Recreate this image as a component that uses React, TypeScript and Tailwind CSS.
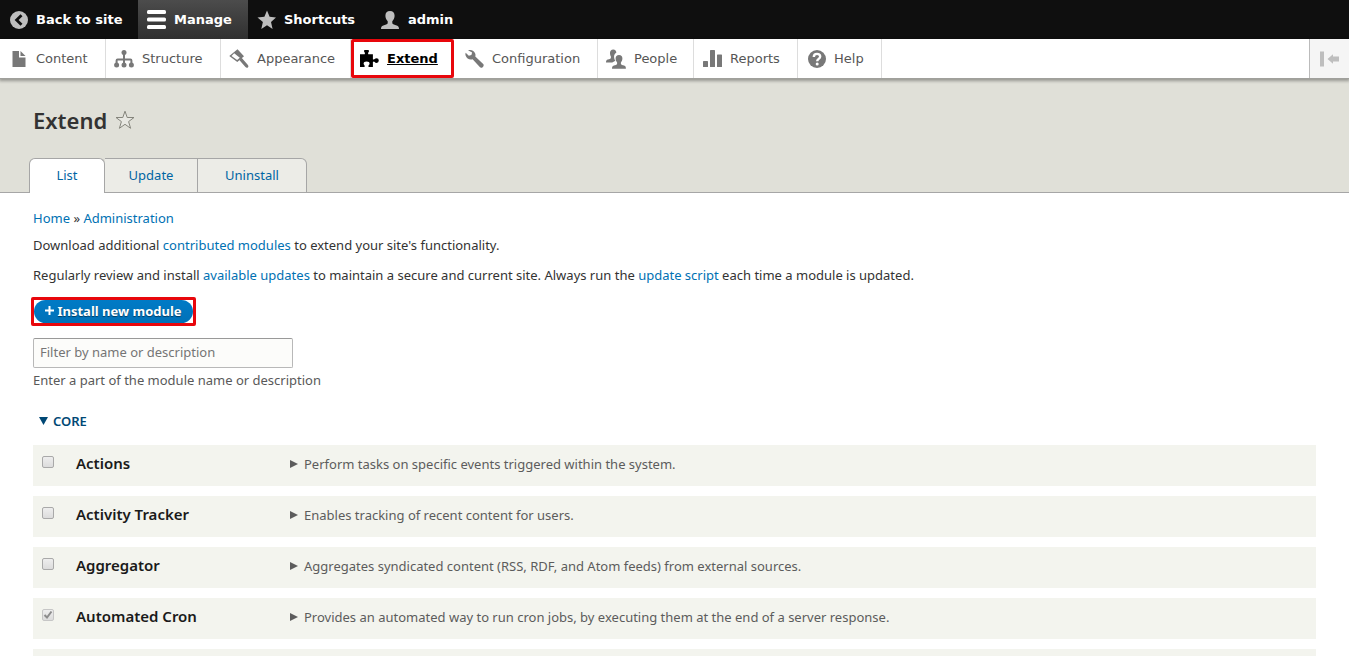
import type { ReactNode } from "react";
import clsx from "clsx";

const modules = [
  {
    id: "action",
    name: "Actions",
    description: "Perform tasks on specific events triggered within the system.",
    enabled: false,
  },
  {
    id: "tracker",
    name: "Activity Tracker",
    description: "Enables tracking of recent content for users.",
    enabled: false,
  },
  {
    id: "aggregator",
    name: "Aggregator",
    description:
      "Aggregates syndicated content (RSS, RDF, and Atom feeds) from external sources.",
    enabled: false,
  },
  {
    id: "automated_cron",
    name: "Automated Cron",
    description:
      "Provides an automated way to run cron jobs, by executing them at the end of a server response.",
    enabled: true,
  },
];

function Icon({ children }: { children: ReactNode }) {
  return (
    <svg viewBox="0 0 20 20" className="h-5 w-5 shrink-0" fill="currentColor" aria-hidden="true">
      {children}
    </svg>
  );
}

const BackIcon = () => (
  <Icon>
    <circle cx="11" cy="10" r="9" />
    <path d="M13.5 5.2 8.6 10l4.9 4.8" fill="none" stroke="#0f0f0f" strokeWidth="2.8" />
  </Icon>
);

const MenuIcon = () => (
  <Icon>
    <rect x="1" y="0" width="19" height="4" rx="1.5" />
    <rect x="1" y="7.5" width="19" height="4" rx="1.5" />
    <rect x="1" y="15" width="19" height="4" rx="1.5" />
  </Icon>
);

const StarIcon = () => (
  <Icon>
    <path d="m11 .5 2.6 6.300 6.400.6-5 4.500 1.600 7L11 15.300l-5.700 3.600 1.600-7L1.500 7.400l6.900-.6z" />
  </Icon>
);

const UserIcon = () => (
  <Icon>
    <path d="M10 1c3 0 4.600 2 4.600 4.800 0 2-.9 4.200-2.300 5.500v2c.4 1.300 2.400 1.500 4.400 2.200 1.700.6 2.300 1.400 2.300 3.500H1c0-2.100.6-2.900 2.300-3.500 2-.7 4-.9 4.400-2.200v-2C6.300 10 5.400 7.800 5.400 5.800 5.400 3 7 1 10 1z" />
  </Icon>
);

const FileIcon = () => (
  <Icon>
    <path d="M4.500 2H11v6.500h6.500V18h-13z" />
    <path d="M12.500 2l5 5h-5z" />
  </Icon>
);

const StructureIcon = () => (
  <Icon>
    <circle cx="10" cy="3.600" r="2.500" />
    <circle cx="2.600" cy="16" r="2.500" />
    <circle cx="10" cy="16" r="2.500" />
    <circle cx="17.400" cy="16" r="2.500" />
    <path d="M10 4v12M2.600 16v-4.500q0-1 1-1h12.800q1 0 1 1V16" fill="none" stroke="currentColor" strokeWidth="2" />
  </Icon>
);

const BrushIcon = () => (
  <Icon>
    <path
      fillRule="evenodd"
      d="M8.500.3 15 7.200 8.300 13 .3 7zM5.200 4.300 2.500 6.900l5.600 4.200 2.700-2.300z"
    />
    <path d="m10.300 11 2.300-2.200 5.900 6.800q1.600 1.700.4 2.800-1.200 1.100-2.700-.6z" />
  </Icon>
);

const PuzzleIcon = () => (
  <Icon>
    <path d="M5 2q0-.9.900-.9h3.200Q10 1.100 10 2q0 .8-.7 1.500-.5.600 0 1.700h4.600v5q1.100.8 1.800-.1.600-.9 1.800-.9 2.300 0 2.300 2.400T17.500 14q-1.200 0-1.800-.9-.7-.9-1.800-.1V18H9.500v-1.500q1.100-.7 1.100-1.900 0-2-3-2t-3 2q0 1.200 1 1.900V18H1V5.200h4.700q.5-1.100 0-1.700Q5 2.800 5 2z" />
  </Icon>
);

const WrenchIcon = () => (
  <Icon>
    <path d="M4 1.300c3.200-1 6.400.4 7.300 3.400.3 1 .2 2 0 2.800l7.900 7.500c1.700 1.700-1.500 5-3.200 3.300L8.600 10.300c-3 .9-6-.6-6.900-3.500-.4-1.200-.4-2.200 0-3.100l3.100 3 2.600-.6.700-2.600z" />
  </Icon>
);

const PeopleIcon = () => (
  <Icon>
    <path d="M7.200.5c2.100 0 3.200 1.300 3.100 3.300-1.700.9-2.500 2.600-2.200 4.700.2 1.500.8 2.600 1.300 3.300L6.200 13.500H0c0-2 .5-2.600 1.900-3 1.600-.5 2.700-.6 3-1.500V7.500C4.300 6.700 3.900 5.300 4 3.800 4.100 1.800 5.200.5 7.200.5z" />
    <path d="M13 6c2.300 0 3.400 1.500 3.400 3.500 0 1.500-.6 2.900-1.500 3.900v1.500c.4.900 1.600 1 3.200 1.500 1.400.5 1.800 1.100 1.800 3.300H6c0-2.200.5-2.800 1.900-3.300 1.600-.5 2.800-.6 3.200-1.500v-1.500c-.9-1-1.500-2.400-1.500-3.900C9.600 7.500 10.800 6 13 6z" />
  </Icon>
);

const ReportsIcon = () => (
  <Icon>
    <rect x="1" y="12" width="5" height="6" rx=".6" />
    <rect x="8" y="1" width="5" height="17" rx=".6" />
    <rect x="15" y="5.500" width="5" height="12.500" rx=".6" />
  </Icon>
);

const HelpIcon = () => (
  <Icon>
    <circle cx="11" cy="10" r="9" />
    <path d="M7.800 8C7.800 3.800 14.200 4 14.200 7.600c0 2.400-3 2.200-3 4.600" fill="none" stroke="#fff" strokeWidth="2.400" />
    <circle cx="11.200" cy="15" r="1.500" fill="#fff" />
  </Icon>
);

const toolbarItems = [
  { label: "Back to site", icon: <BackIcon />, width: "w-[138px]" },
  { label: "Manage", icon: <MenuIcon />, width: "w-[110px]", active: true },
  { label: "Shortcuts", icon: <StarIcon />, width: "w-[124px]" },
  { label: "admin", icon: <UserIcon />, width: "w-[98px]" },
];

const trayItems = [
  { label: "Content", icon: <FileIcon />, width: "w-[106px]" },
  { label: "Structure", icon: <StructureIcon />, width: "w-[115px]" },
  { label: "Appearance", icon: <BrushIcon />, width: "w-[130px]" },
  { label: "Extend", icon: <PuzzleIcon />, width: "w-[103px]", active: true },
  { label: "Configuration", icon: <WrenchIcon />, width: "w-[144px]" },
  { label: "People", icon: <PeopleIcon />, width: "w-[96px]" },
  { label: "Reports", icon: <ReportsIcon />, width: "w-[104px]" },
  { label: "Help", icon: <HelpIcon />, width: "w-[84px]" },
];

const tabs = [
  { label: "List", width: "w-[76px]", active: true },
  { label: "Update", width: "w-[93px]" },
  { label: "Uninstall", width: "w-[109px]" },
];

function Link({ children }: { children: ReactNode }) {
  return (
    <a href="#" className="text-[#0071b3]">
      {children}
    </a>
  );
}

function Toolbar() {
  return (
    <header className="relative font-['DejaVu_Sans',Verdana,sans-serif] text-[13px]">
      <nav className="flex h-[39px] bg-[#0f0f0f] font-bold text-white" aria-label="Toolbar">
        {toolbarItems.map((item) => (
          <a
            key={item.label}
            href="#"
            className={clsx(
              "flex items-center gap-2 pl-2 whitespace-nowrap",
              item.width,
              item.active && "bg-linear-to-b from-[#4c4c4c] to-[#303030]"
            )}
          >
            <span className={item.active ? "text-white" : "text-[#bebebe]"}>{item.icon}</span>
            {item.label}
          </a>
        ))}
      </nav>
      <nav
        className="flex h-10 border-b border-[#a0a09c] bg-white text-[#565656] shadow-[0_1px_3px_1px_rgba(0,0,0,0.33)]"
        aria-label="Administration menu"
      >
        {trayItems.map((item) => (
          <a
            key={item.label}
            href="#"
            className={clsx(
              "flex items-center gap-2 whitespace-nowrap",
              item.width,
              item.active && "rounded-xs border-3 border-[#e8070c] pl-[5px] font-bold text-black",
              !item.active && "border-r border-[#ddd]",
              !item.active && (item.label === "Configuration" ? "pl-[10px]" : "pl-2")
            )}
          >
            <span className={item.active ? "text-black" : "text-[#787878]"}>{item.icon}</span>
            <span className={clsx(item.active && "underline")}>{item.label}</span>
          </a>
        ))}
        <button
          type="button"
          aria-label="Vertical orientation"
          className="ml-auto flex w-10 items-center justify-center border-l border-[#bbb] bg-[#f5f5f5] text-[#bebebe]"
        >
          <Icon>
            <rect x="0" y="2.500" width="4" height="15" />
            <path d="M7.500 10 13 5.200V7.500h6v5h-6v2.300z" />
          </Icon>
        </button>
      </nav>
    </header>
  );
}

function ModuleTable() {
  return (
    <table className="w-full table-fixed border-separate border-spacing-x-0 border-spacing-y-[10px]">
      <tbody>
        {modules.map((mod) => (
          <tr key={mod.id} className="h-[41px] bg-[#f3f4ee]">
            <td className="w-[43px] pl-[9px]">
              <span className="relative flex pb-[7px]">
                <input
                  id={mod.id}
                  type="checkbox"
                  defaultChecked={mod.enabled}
                  disabled={mod.enabled}
                  className={clsx(
                    "h-3 w-3 appearance-none rounded-xs border bg-linear-to-b from-[#eee] to-[#dcdcdc]",
                    mod.enabled ? "border-[#c6c6c6]" : "border-[#a9a9a9]"
                  )}
                />
                {mod.enabled && (
                  <svg viewBox="0 0 12 12" className="pointer-events-none absolute top-0 left-0 h-3 w-3" fill="none">
                    <path d="M2.500 6 5 8.500 9.500 2.500" stroke="#8c8c8c" strokeWidth="2" />
                  </svg>
                )}
              </span>
            </td>
            <td className="w-[214px] pb-1">
              <label htmlFor={mod.id} className="text-[15px] font-semibold text-[#1a1a1a]">
                {mod.name}
              </label>
            </td>
            <td className="pb-1 text-[13px] text-[#5c5c5c]">
              <details>
                <summary className="flex items-center gap-[6px]">
                  <svg viewBox="0 0 8 8" className="h-2 w-2" fill="currentColor" aria-hidden="true">
                    <path d="M0 0l8 4-8 4z" />
                  </svg>
                  {mod.description}
                </summary>
              </details>
            </td>
          </tr>
        ))}
        <tr className="h-[41px] bg-[#f3f4ee]">
          <td colSpan={3} />
        </tr>
      </tbody>
    </table>
  );
}

export default function App() {
  return (
    <div className="h-screen overflow-hidden bg-white font-['Noto_Sans','Open_Sans',sans-serif] text-[13px] leading-5 text-[#333]">
      <Toolbar />

      <div className="flex h-[114px] flex-col justify-between border-b border-[#a6a6a6] bg-[#e0e0d8] pl-[29px]">
        <div className="flex items-center gap-2 pt-[26px] pl-1">
          <h1 className="text-[22px] leading-[30px] font-semibold text-[#333]">Extend</h1>
          <button type="button" aria-label="Add to shortcuts">
            <svg viewBox="0 0 20 20" className="h-5 w-5" fill="#e8e8e2" stroke="#85857c">
              <path d="m10 1.200 2.200 6.300h6.800l-5.400 4.100 2 6.700-5.600-4-5.600 4 2-6.700L1 7.500h6.800z" />
            </svg>
          </button>
        </div>
        <nav className="-mb-px flex" aria-label="Tabs">
          {tabs.map((tab) => (
            <a
              key={tab.label}
              href="#"
              className={clsx(
                "flex h-[35px] items-center justify-center border-t border-r border-[#a6a6a6] pb-[2px] text-[#0065a3]",
                tab.width,
                tab.active ? "rounded-t-md border-l bg-white" : "border-b bg-[#ecece7] last:rounded-tr-md"
              )}
            >
              {tab.label}
            </a>
          ))}
        </nav>
      </div>

      <main className="px-[33px] pt-[15px]">
        <nav aria-label="Breadcrumb">
          <Link>Home</Link> » <Link>Administration</Link>
        </nav>
        <p className="mt-[7px]">
          Download additional <Link>contributed modules</Link> to extend your site's functionality.
        </p>
        <p className="mt-[10px]">
          Regularly review and install <Link>available updates</Link> to maintain a secure and current
          site. Always run the <Link>update script</Link> each time a module is updated.
        </p>

        <div className="mt-3 -ml-[2px] flex w-[165px] rounded-xs border-3 border-[#e8070c]">
          <button
            type="button"
            className="flex h-[23px] flex-1 items-center justify-center gap-[3px] rounded-full bg-linear-to-b from-[#007bc6] to-[#0071b8] pb-[2px] font-bold whitespace-nowrap text-white text-shadow-[0_1px_1px_rgba(0,0,0,0.5)]"
          >
            <svg viewBox="0 0 9 9" className="h-[9px] w-[9px]" stroke="#fff" strokeWidth="2" aria-hidden="true">
              <path d="M4.500 0v9M0 4.500h9" />
            </svg>
            Install new module
          </button>
        </div>

        <input
          id="module-filter"
          type="search"
          placeholder="Filter by name or description"
          aria-describedby="module-filter-description"
          aria-label="Filter modules"
          className="mt-3 block h-[30px] w-[260px] rounded-xs border border-[#b8b8b8] border-t-[#999] bg-[#fcfcfa] px-[6px] pb-[2px] placeholder:text-[#757575]"
        />
        <p id="module-filter-description" className="mt-[2px] text-[13px] leading-5 text-[#595959]">
          Enter a part of the module name or description
        </p>

        <button type="button" className="mt-[21px] flex items-center gap-[5px] pl-[6px] font-semibold text-[#004875]">
          <svg viewBox="0 0 9 8" className="h-2 w-[9px]" fill="currentColor" aria-hidden="true">
            <path d="M0 0h9L4.500 8z" />
          </svg>
          CORE
        </button>
        <div className="mt-1">
          <ModuleTable />
        </div>
      </main>
    </div>
  );
}
